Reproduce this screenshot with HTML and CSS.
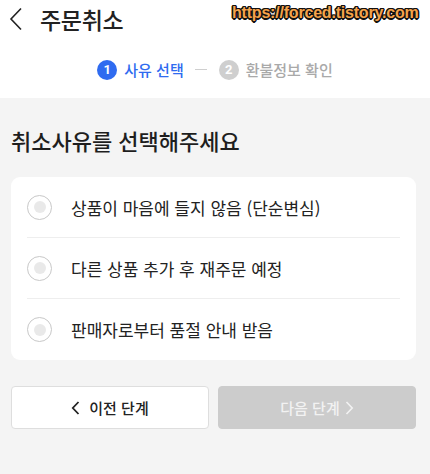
FILE: index.html
```html
<!DOCTYPE html>
<html lang="ko">
<head>
<meta charset="utf-8">
<link rel="stylesheet" href="styles.css">
</head>
<body>
<div class="page">
  <header class="header">
    <div class="topbar">
      <svg class="back" width="14" height="24" viewBox="0 0 14 24"><path d="M12 1.5 L2 12 L12 22.5" fill="none" stroke="#222" stroke-width="1.6"/></svg>
      <h1 class="title">주문취소</h1>
    </div>
    <div class="steps">
      <div class="step active"><span class="num">1</span><span class="label">사유 선택</span></div>
      <span class="dash"></span>
      <div class="step"><span class="num">2</span><span class="label">환불정보 확인</span></div>
    </div>
  </header>
  <main class="content">
    <h2 class="heading">취소사유를 선택해주세요</h2>
    <div class="card">
      <div class="row"><span class="radio"></span><span class="rtext">상품이 마음에 들지 않음 (단순변심)</span></div>
      <div class="row"><span class="radio"></span><span class="rtext">다른 상품 추가 후 재주문 예정</span></div>
      <div class="row"><span class="radio"></span><span class="rtext">판매자로부터 품절 안내 받음</span></div>
    </div>
    <div class="buttons">
      <button class="btn prev"><svg width="9" height="14" viewBox="0 0 9 14"><path d="M7.5 1 L1.8 7 L7.5 13" fill="none" stroke="#222" stroke-width="1.8"/></svg><span>이전 단계</span></button>
      <button class="btn next"><span>다음 단계</span><svg width="9" height="14" viewBox="0 0 9 14"><path d="M1.5 1 L7.2 7 L1.5 13" fill="none" stroke="#f2f2f2" stroke-width="1.6"/></svg></button>
    </div>
  </main>
  <div class="watermark">https://forced.tistory.com</div>
</div>
</body>
</html>
```
FILE: styles.css
```css
* { box-sizing: border-box; }
html, body { margin: 0; padding: 0; }
body {
  background: #f4f4f4;
  font-family: "Noto Sans CJK KR", "Noto Sans", sans-serif;
  color: #222;
  width: 430px;
  height: 474px;
  overflow: hidden;
}
.page { position: relative; }
.header {
  background: #fff;
  height: 98px;
}
.topbar {
  display: flex;
  align-items: center;
  height: 38px;
  padding-left: 9px;
}
.back { display: block; margin-top: 0; }
.title {
  margin: 0 0 0 17px;
  font-size: 23px;
  font-weight: 500;
  line-height: 1;
  color: #222;
  letter-spacing: -0.3px;
}
.steps {
  display: flex;
  align-items: center;
  justify-content: center;
  margin-top: 21px;
  padding-left: 0;
}
.step {
  display: flex;
  align-items: center;
  color: #a9a9a9;
}
.num {
  width: 20px;
  height: 20px;
  border-radius: 50%;
  background: #cfcfcf;
  color: #fff;
  font-size: 13px;
  font-weight: 700;
  display: flex;
  align-items: center;
  justify-content: center;
  font-family: "Roboto", "Noto Sans", sans-serif;
}
.label {
  margin-left: 7px;
  font-size: 15px;
  font-weight: 500;
}
.step.active { color: #2f6bf0; }
.step.active .num { background: #2f6bf0; }
.dash {
  width: 12px;
  height: 1px;
  background: #cfcfcf;
  margin: 0 12px 0 11px;
}
.content {
  padding: 27px 14px 0 11px;
}
.heading {
  margin: 0;
  font-size: 22px;
  font-weight: 500;
  line-height: 30px;
  color: #1e1e1e;
}
.card {
  margin-top: 22px;
  background: #fff;
  border-radius: 9px;
  padding: 0 16px;
}
.row {
  display: flex;
  align-items: center;
  height: 61px;
  border-bottom: 1px solid #eeeeee;
}
.row:last-child { border-bottom: none; }
.radio {
  width: 25px;
  height: 25px;
  border-radius: 50%;
  border: 1.5px solid #c8c8c8;
  display: flex;
  align-items: center;
  justify-content: center;
  flex: none;
}
.radio::after {
  content: "";
  width: 12px;
  height: 12px;
  border-radius: 50%;
  background: #e9e9e9;
}
.rtext {
  margin-left: 19px;
  font-size: 17px;
  color: #222;
}
.buttons {
  display: grid;
  grid-template-columns: 1fr 1fr;
  gap: 9px;
  margin-top: 26px;
}
.btn {
  height: 43px;
  border-radius: 4px;
  font-family: "Noto Sans CJK KR", "Noto Sans", sans-serif;
  font-size: 15px;
  font-weight: 500;
  display: flex;
  align-items: center;
  justify-content: center;
  gap: 9px;
  padding: 0;
}
.btn.prev {
  background: #fff;
  border: 1px solid #dedede;
  color: #222;
}
.btn.next {
  background: #cccccc;
  border: 1px solid #cccccc;
  color: #f2f2f2;
  gap: 5px;
}
.watermark {
  position: absolute;
  top: 4px;
  left: 232px;
  white-space: nowrap;
  font-family: "Liberation Sans", sans-serif;
  font-weight: 700;
  font-size: 16px;
  letter-spacing: -0.2px;
  color: #f5a34a;
  text-shadow: -1.5px 0 #111, 1.5px 0 #111, 0 -1.5px #111, 0 1.5px #111, -1px -1px #111, 1px 1px #111, -1px 1px #111, 1px -1px #111;
}
```
